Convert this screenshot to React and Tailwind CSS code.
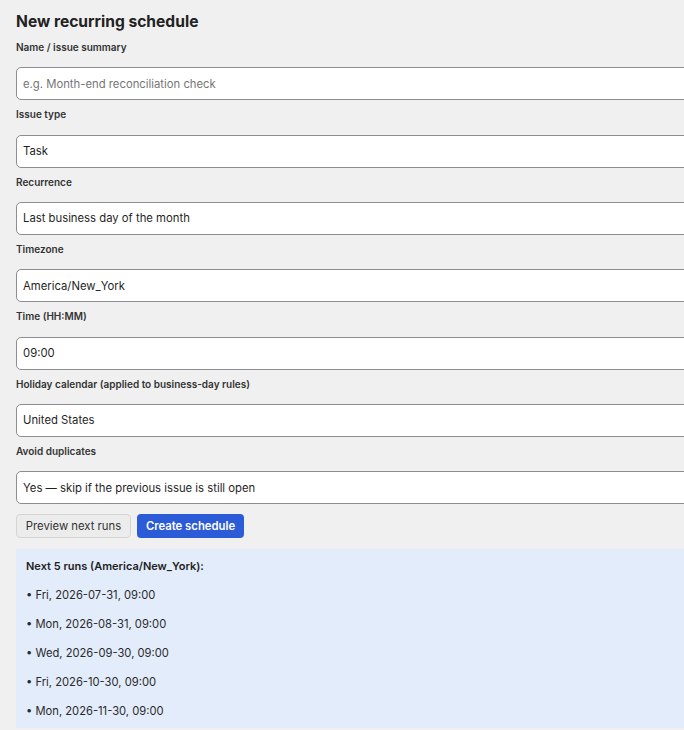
import { useState } from 'react'

const fields = [
  { label: 'Name / issue summary', value: '', placeholder: 'e.g. Month-end reconciliation check' },
  { label: 'Issue type', value: 'Task' },
  { label: 'Recurrence', value: 'Last business day of the month' },
  { label: 'Timezone', value: 'America/New_York' },
  { label: 'Time (HH:MM)', value: '09:00' },
  { label: 'Holiday calendar (applied to business-day rules)', value: 'United States' },
  { label: 'Avoid duplicates', value: 'Yes — skip if the previous issue is still open' },
]

const runs = [
  'Fri, 2026-07-31, 09:00',
  'Mon, 2026-08-31, 09:00',
  'Wed, 2026-09-30, 09:00',
  'Fri, 2026-10-30, 09:00',
  'Mon, 2026-11-30, 09:00',
]

export default function App() {
  const [values, setValues] = useState(fields.map((f) => f.value))

  return (
    <div
      className="w-[684px] h-[730px] overflow-hidden bg-[#f0f0f0] text-[#1f1f1f]"
      style={{ fontFamily: 'Inter, "Noto Sans", sans-serif' }}
    >
      <div className="pl-4 pt-[11px] w-[740px]">
        <h1 className="text-[15.6px] font-bold leading-[22px] text-[#222]">New recurring schedule</h1>

        {fields.map((f, i) => (
          <div key={f.label}>
            <label className="block text-[10px] font-semibold text-[#333] leading-[14px] mt-[7px] mb-[13.33px]">
              {f.label}
            </label>
            <input
              value={values[i]}
              placeholder={f.placeholder}
              onChange={(e) => setValues(values.map((v, j) => (j === i ? e.target.value : v)))}
              className="block w-full h-[33px] px-[6px] text-[11.3px] text-[#1f1f1f] placeholder:text-[#767676] bg-white border border-[#8d8d92] rounded-[5px] outline-none"
            />
          </div>
        ))}

        <div className="flex gap-[6px] mt-[10px]">
          <button className="h-[24px] w-[115px] text-[11.3px] text-[#333] bg-[#ececec] border border-[#d4d4d4] rounded-[4px]">
            Preview next runs
          </button>
          <button className="h-[24px] w-[107px] text-[11.3px] font-semibold text-white bg-[#2b5bd6] rounded-[4px]">
            Create schedule
          </button>
        </div>

        <div className="mt-[11px] bg-[#e3ecfb] pl-[10px] pt-[9px] h-[179px]">
          <p className="text-[11px] font-semibold leading-[16px] text-[#1f1f1f]">Next 5 runs (America/New_York):</p>
          <ul className="mt-[7px]">
            {runs.map((r) => (
              <li key={r} className="text-[11.2px] leading-[16px] h-[29px] pt-[6px] text-[#2a2a2a]">
                • {r}
              </li>
            ))}
          </ul>
        </div>
      </div>
    </div>
  )
}
